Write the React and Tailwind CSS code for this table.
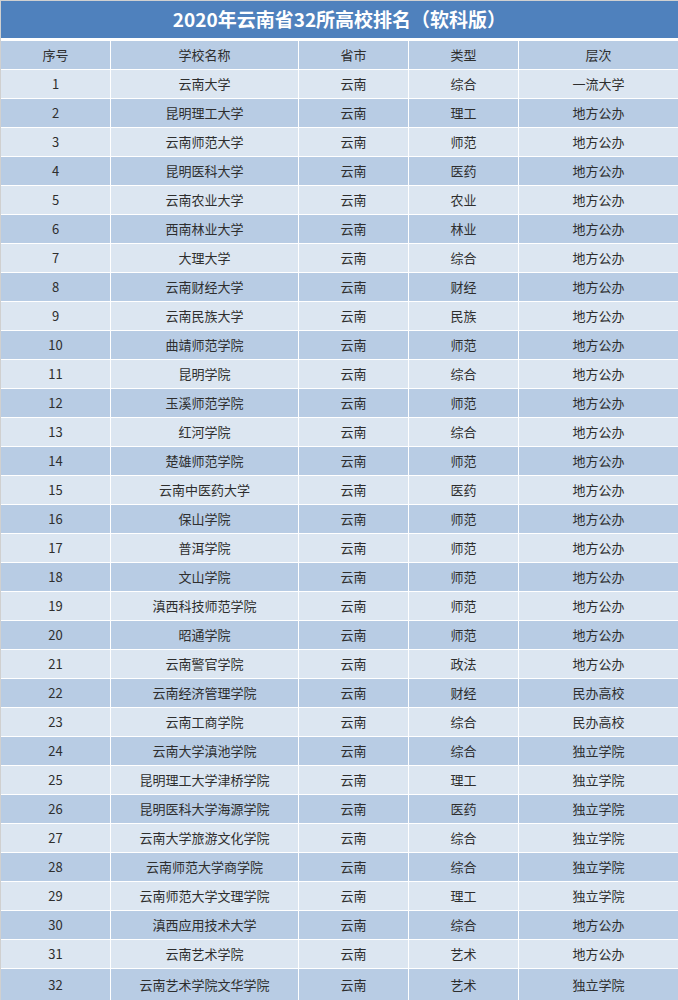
import React from 'react';

const rows = [
  ['云南大学', '综合', '一流大学'],
  ['昆明理工大学', '理工', '地方公办'],
  ['云南师范大学', '师范', '地方公办'],
  ['昆明医科大学', '医药', '地方公办'],
  ['云南农业大学', '农业', '地方公办'],
  ['西南林业大学', '林业', '地方公办'],
  ['大理大学', '综合', '地方公办'],
  ['云南财经大学', '财经', '地方公办'],
  ['云南民族大学', '民族', '地方公办'],
  ['曲靖师范学院', '师范', '地方公办'],
  ['昆明学院', '综合', '地方公办'],
  ['玉溪师范学院', '师范', '地方公办'],
  ['红河学院', '综合', '地方公办'],
  ['楚雄师范学院', '师范', '地方公办'],
  ['云南中医药大学', '医药', '地方公办'],
  ['保山学院', '师范', '地方公办'],
  ['普洱学院', '师范', '地方公办'],
  ['文山学院', '师范', '地方公办'],
  ['滇西科技师范学院', '师范', '地方公办'],
  ['昭通学院', '师范', '地方公办'],
  ['云南警官学院', '政法', '地方公办'],
  ['云南经济管理学院', '财经', '民办高校'],
  ['云南工商学院', '综合', '民办高校'],
  ['云南大学滇池学院', '综合', '独立学院'],
  ['昆明理工大学津桥学院', '理工', '独立学院'],
  ['昆明医科大学海源学院', '医药', '独立学院'],
  ['云南大学旅游文化学院', '综合', '独立学院'],
  ['云南师范大学商学院', '综合', '独立学院'],
  ['云南师范大学文理学院', '理工', '独立学院'],
  ['滇西应用技术大学', '综合', '地方公办'],
  ['云南艺术学院', '艺术', '地方公办'],
  ['云南艺术学院文华学院', '艺术', '独立学院'],
];

const cols = 'grid grid-cols-[109px_187px_109px_109px_1fr] gap-x-px';

const Row = ({ cells, bg, last }) => (
  <div className={`${cols} ${last ? 'flex-1' : 'h-[28px]'} mt-px`}>
    {cells.map((c, i) => (
      <div key={i} className={`${bg} flex items-center justify-center`}>
        {c}
      </div>
    ))}
  </div>
);

export default function App() {
  return (
    <div
      className="w-[678px] h-[1000px] flex flex-col overflow-hidden bg-white border-t border-l border-[#d0d0d0] text-[13px] text-[#2e2e2e]"
      style={{ fontFamily: '"Noto Sans CJK SC", "Noto Sans", sans-serif' }}
    >
      <div className="h-[37px] shrink-0 bg-[#4f81bd] flex items-center justify-center text-white text-[19px] font-bold">
        2020年云南省32所高校排名（软科版）
      </div>
      <div className="h-[2px] shrink-0" />
      <Row cells={['序号', '学校名称', '省市', '类型', '层次']} bg="bg-[#b8cce4]" />
      {rows.map((r, i) => (
        <Row
          key={i}
          last={i === rows.length - 1}
          cells={[i + 1, r[0], '云南', r[1], r[2]]}
          bg={i % 2 === 0 ? 'bg-[#dce6f1]' : 'bg-[#b8cce4]'}
        />
      ))}
    </div>
  );
}
